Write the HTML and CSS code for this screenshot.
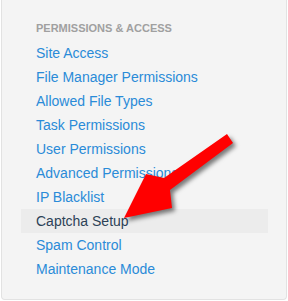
FILE: index.html
```html
<!DOCTYPE html>
<html lang="en">
<head>
    <meta charset="UTF-8">
    <title>Permissions &amp; Access</title>
    <link rel="stylesheet" href="styles.css">
</head>
<body>
    <div class="panel">
        <h3 class="panel-title">Permissions &amp; Access</h3>
        <ul class="menu">
            <li><a href="#">Site Access</a></li>
            <li><a href="#">File Manager Permissions</a></li>
            <li><a href="#">Allowed File Types</a></li>
            <li><a href="#">Task Permissions</a></li>
            <li><a href="#">User Permissions</a></li>
            <li><a href="#">Advanced Permissions</a></li>
            <li><a href="#">IP Blacklist</a></li>
            <li class="active"><a href="#">Captcha Setup</a></li>
            <li><a href="#">Spam Control</a></li>
            <li><a href="#">Maintenance Mode</a></li>
        </ul>
    </div>

    <!-- annotation arrow -->
    <svg class="arrow" width="288" height="301" viewBox="0 0 288 301">
        <polygon points="227,134 233,143 170,190 172,208 124,218 146,174 164,178" fill="#ff0000"/>
    </svg>
</body>
</html>
```

FILE: styles.css
```css
* {
    margin: 0;
    padding: 0;
    box-sizing: border-box;
}

body {
    background: #ffffff;
    font-family: "Liberation Sans", Arial, sans-serif;
    width: 288px;
    height: 301px;
    overflow: hidden;
}

.panel {
    margin: 0 1px;
    height: 300px;
    background: #f4f4f4;
    border: 1px solid #e2e2e2;
    border-top: none;
    border-radius: 0 0 4px 4px;
    padding: 20px 18px 0 19px;
}

.panel-title {
    font-size: 11px;
    font-weight: bold;
    text-transform: uppercase;
    color: #a0a0a0;
    line-height: 16px;
    padding-left: 15px;
    margin-bottom: 5px;
}

.menu {
    list-style: none;
}

.menu li {
    height: 24px;
}

.menu a {
    display: block;
    padding-left: 15px;
    font-size: 14px;
    line-height: 24px;
    color: #2a8bd8;
    text-decoration: none;
}

.menu li.active {
    background: #ececec;
}

.menu li.active a {
    color: #2c4257;
}

.arrow {
    position: absolute;
    top: 0;
    left: 0;
    filter: drop-shadow(3px 3px 2px rgba(0, 0, 0, 0.5));
}
```
